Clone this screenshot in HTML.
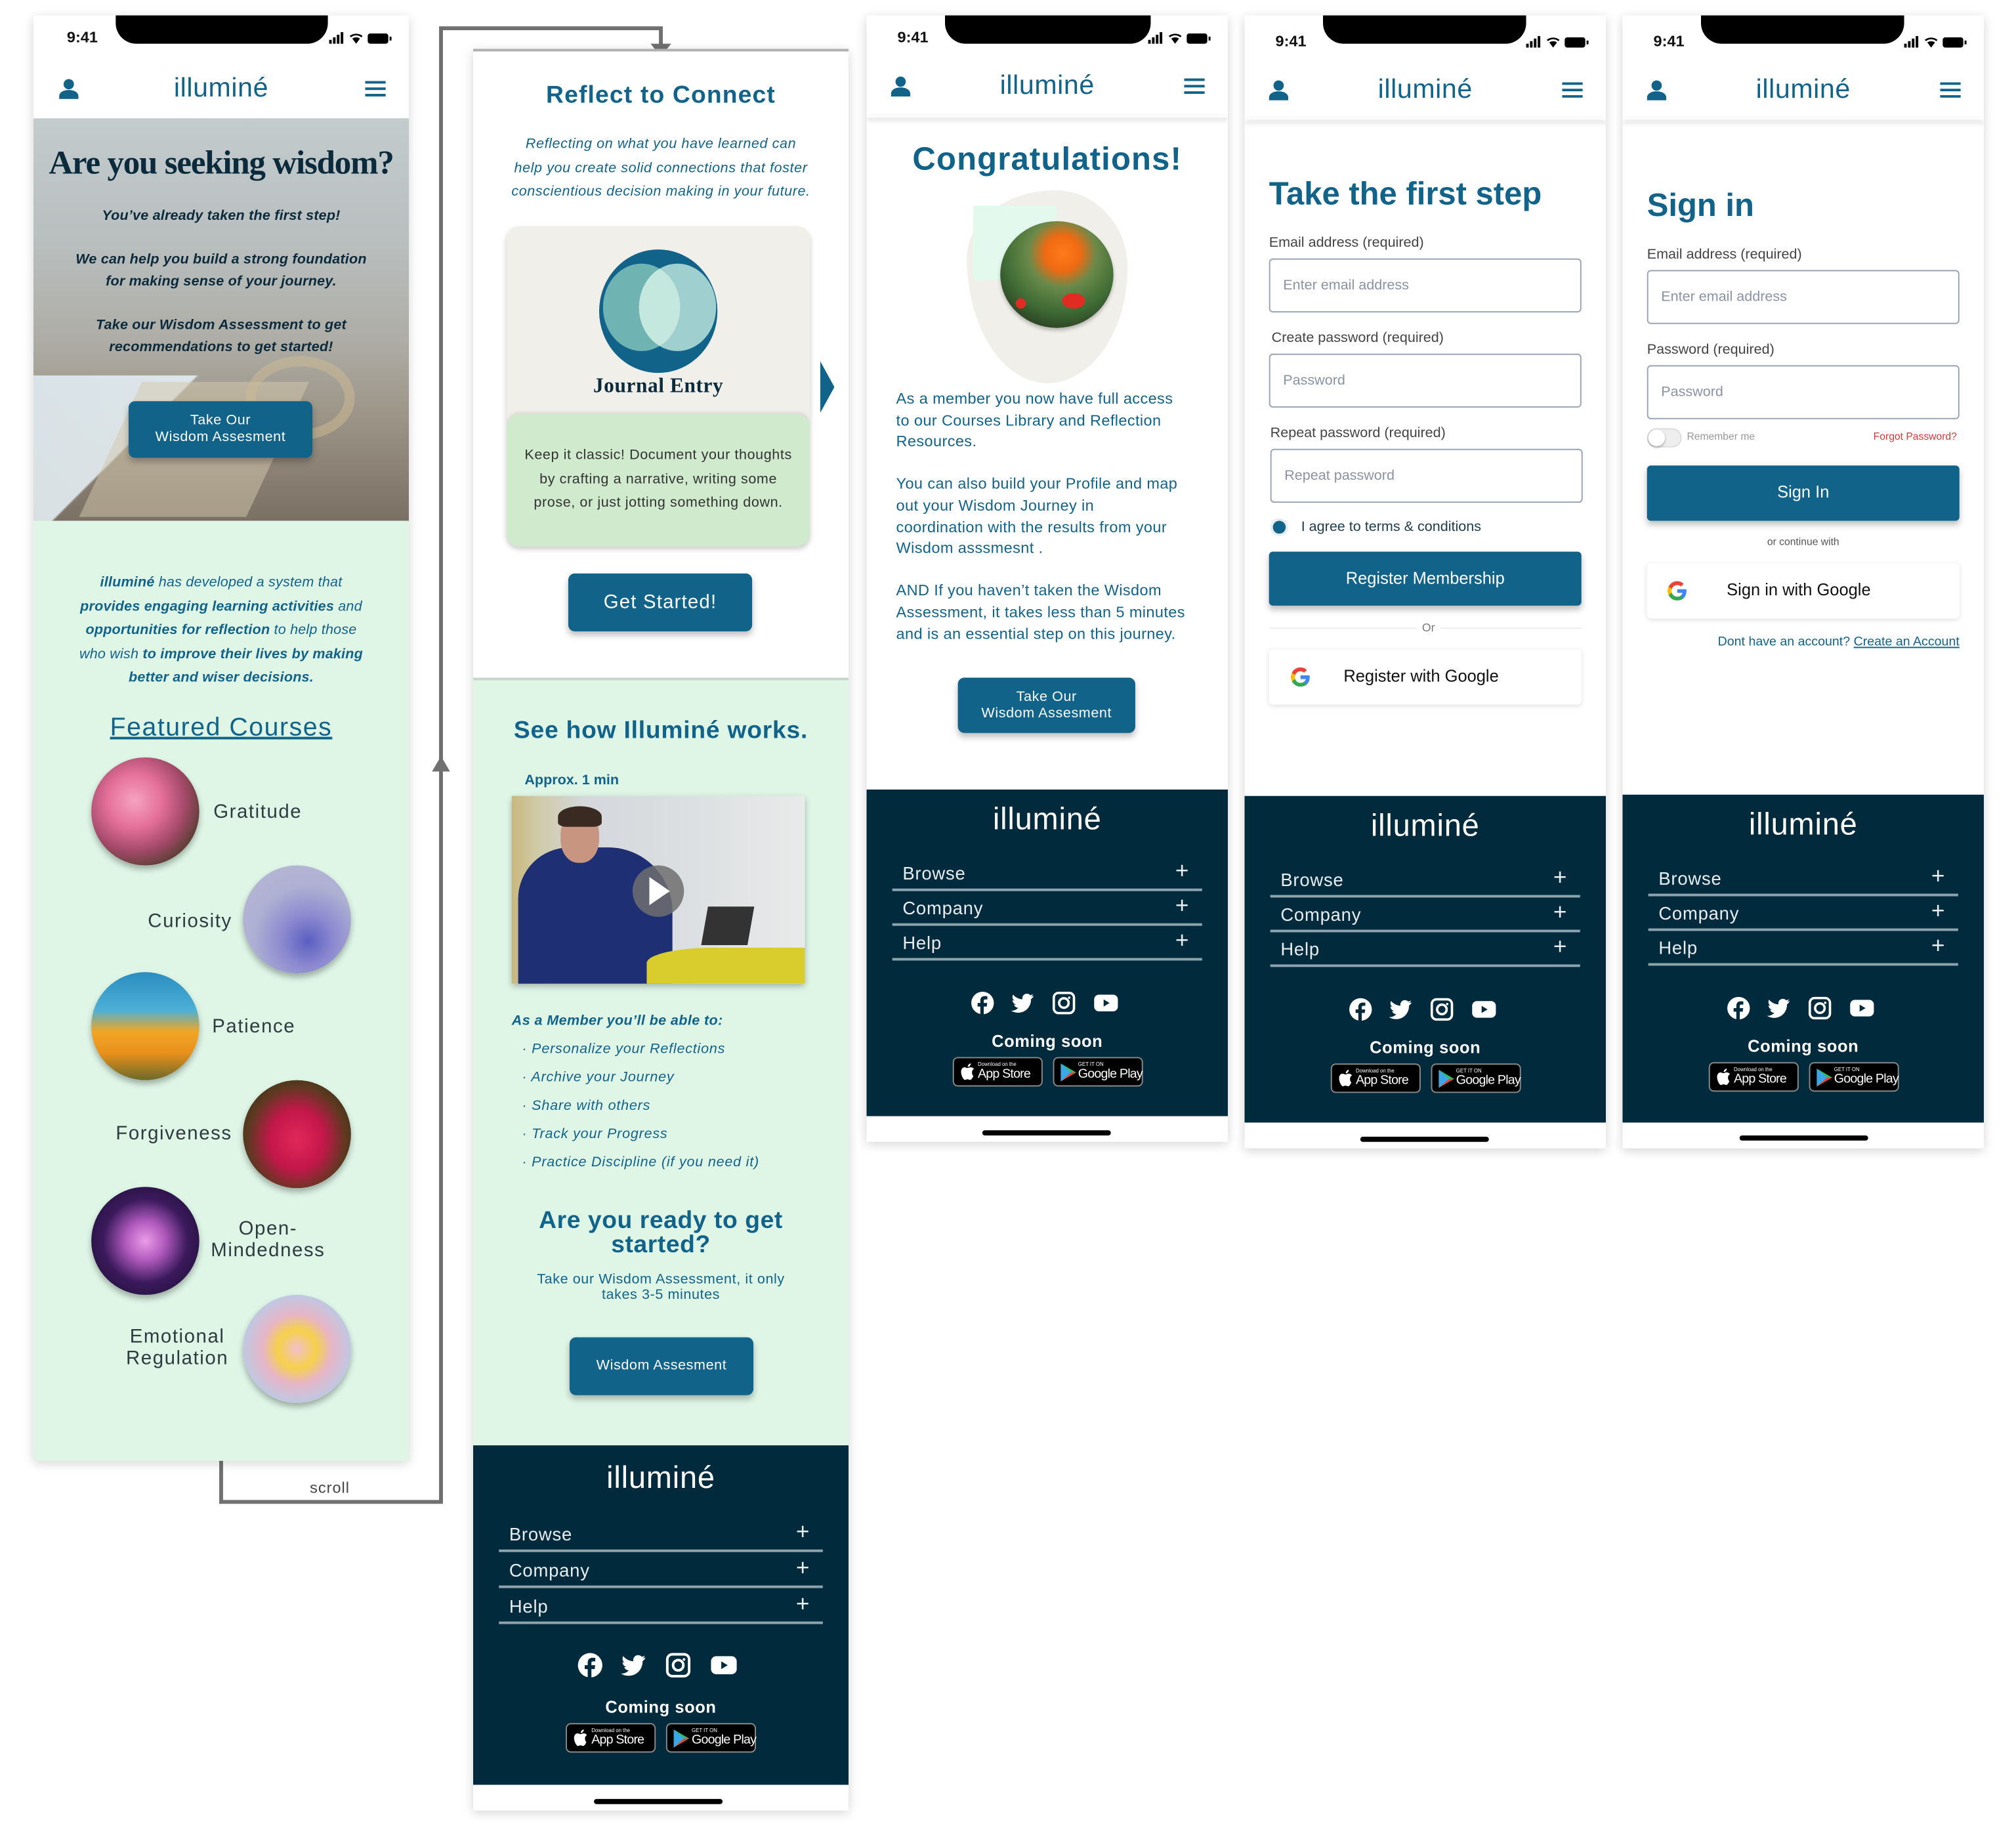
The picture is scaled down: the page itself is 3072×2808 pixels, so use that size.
<!DOCTYPE html>
<html><head><meta charset="utf-8">
<style>
*{box-sizing:border-box;margin:0;padding:0}
html,body{width:3072px;height:2808px;overflow:hidden;background:#fff}
body{font-family:"Liberation Sans",sans-serif}
.w{position:absolute;left:0;top:0;width:1568px;height:1433px;transform:scale(1.95918);transform-origin:0 0}
.a{position:absolute}
.ph{position:absolute;background:#fff;box-shadow:0 2px 8px rgba(0,0,0,.18);overflow:hidden}
.c{text-align:center;left:0;right:0}
.teal{color:#12638a}
.btn{position:absolute;background:#12638a;color:#fff;border-radius:5px;text-align:center;box-shadow:0 3px 5px rgba(0,0,0,.25);display:flex;align-items:center;justify-content:center;line-height:1.15;letter-spacing:.3px}
.notch{position:absolute;top:0;height:22px;background:#000;border-radius:0 0 16px 16px}
.time{position:absolute;font-size:12px;font-weight:bold;color:#111}
.sig{position:absolute;width:50px;height:10px}
.logo{position:absolute;font-size:21px;color:#12638a;text-align:center;left:0;right:0;letter-spacing:.3px}
.hdr{position:absolute;left:0;right:0;height:1px;box-shadow:0 2px 4px rgba(0,0,0,.35)}
.ft{position:absolute;left:0;right:0;background:#022a3d;color:#fff}
.ft .lg{position:absolute;left:0;right:0;text-align:center;font-size:24px;top:10px;letter-spacing:.4px}
.ft .row{position:absolute;left:20px;right:20px;height:27px;border-bottom:2px solid #8da4ae;font-size:14px;color:#e8eef0;letter-spacing:.4px}
.ft .row span{position:absolute;left:8px;top:5px}
.ft .row b{position:absolute;right:10px;top:1px;font-weight:normal;font-size:18px}
.ft .ic{position:absolute;left:0;right:0;text-align:center;white-space:nowrap}
.ft .cs{position:absolute;left:0;right:0;text-align:center;font-size:13px;font-weight:bold;letter-spacing:.3px}
.bd{display:inline-block;width:70px;height:23px;background:#000;border:1px solid #888;border-radius:4px;margin:0 4px;position:relative;color:#fff;text-align:left;vertical-align:top;white-space:nowrap}
.bd i{position:absolute;left:19px;top:2px;font-style:normal;font-size:4px}
.bd em{position:absolute;left:19px;top:7px;font-style:normal;font-size:10px;letter-spacing:-.4px;white-space:nowrap}
.hb{position:absolute;height:4px;width:100px;background:#000;border-radius:2px}
.lbl{position:absolute;font-size:11px;color:#444}
.inp{position:absolute;height:42px;border:1px solid #9aa3b5;border-radius:3px;font-size:11px;color:#8a93a3;padding:14px 10px}
.flow{position:absolute;width:84px;height:84px;border-radius:50%;box-shadow:0 3px 5px rgba(0,0,0,.3)}
.cl{position:absolute;font-size:15px;color:#2e3b40;text-align:center;letter-spacing:.8px}
.ml{position:absolute;font-size:11px;font-style:italic;color:#12638a;letter-spacing:.4px}
</style></head><body><div class="w">

<svg class="a" style="left:0;top:0" width="1568" height="1433">
<polyline points="172,1136 172,1168 343,1168 343,22 514,22 514,36" fill="none" stroke="#707070" stroke-width="3"/>
<polygon points="506,34 522,34 514,44" fill="#707070"/>
<polygon points="336,600 350,600 343,588" fill="#707070"/>
</svg>
<div class="a" style="left:241px;top:1150px;font-size:12px;color:#444;letter-spacing:.5px">scroll</div>

<!-- PHONE A -->
<div class="ph" style="left:26px;top:12px;width:292px;height:1124px">
  <div class="notch" style="left:64px;width:165px"></div>
  <div class="time" style="left:26px;top:10px">9:41</div>
  <svg class="sig" style="right:12px;top:13px" viewBox="0 0 50 10"><rect x="0" y="6" width="2" height="3"/><rect x="3" y="4" width="2" height="5"/><rect x="6" y="2" width="2" height="7"/><rect x="9" y="0" width="2" height="9"/><path d="M16 3a8 8 0 0 1 10 0l-1 1a6 6 0 0 0-8 0zM18 5a5 5 0 0 1 6 0l-3 4z"/><rect x="30" y="1" width="16" height="8" rx="2"/><rect x="47" y="3.5" width="1.5" height="3"/></svg>
  <svg class="a" style="left:20px;top:49px" width="15" height="16" viewBox="0 0 15 16"><circle cx="7.5" cy="4.5" r="4" fill="#12638a"/><path d="M0 16v-2c0-3 3-5 7.5-5s7.5 2 7.5 5v2z" fill="#12638a"/></svg>
  <div class="logo" style="top:45px">illuminé</div>
  <svg class="a" style="right:18px;top:51px" width="16" height="12"><rect y="0" width="16" height="2" fill="#12638a"/><rect y="5" width="16" height="2" fill="#12638a"/><rect y="10" width="16" height="2" fill="#12638a"/></svg>
  <div class="a" style="left:0;top:80px;width:292px;height:313px;background:linear-gradient(180deg,#c3cbcd 0%,#b9bfbf 30%,#aeada6 55%,#9b9385 75%,#7a7064 100%)">
    <div class="a" style="left:0;top:200px;width:140px;height:113px;background:linear-gradient(135deg,#dfeaf0 0%,#e3edf2 50%,transparent 51%);opacity:.9"></div>
    <div class="a" style="left:60px;top:205px;width:130px;height:105px;background:#d4c8ab;opacity:.5;transform:skewX(-25deg)"></div>
    <div class="a" style="left:165px;top:185px;width:85px;height:65px;border-radius:50%;border:8px solid #cdbb94;opacity:.5"></div>
  </div>
  <div class="a c" style="top:100px;font-family:'Liberation Serif',serif;font-weight:bold;font-size:26px;color:#0b2a3b;letter-spacing:-.6px">Are you seeking wisdom?</div>
  <div class="a c" style="top:148px;font-size:11px;font-weight:bold;font-style:italic;color:#0b2a3b;line-height:17px;letter-spacing:.1px">You’ve already taken the first step!<br><br>We can help you build a strong foundation<br>for making sense of your journey.<br><br>Take our Wisdom Assessment to get<br>recommendations to get started!</div>
  <div class="btn" style="left:74px;top:300px;width:143px;height:44px;font-size:11px">Take Our<br>Wisdom Assesment</div>
  <div class="a" style="left:0;top:393px;width:292px;height:731px;background:#dff6e7"></div>
  <div class="a c" style="top:432px;font-size:11px;font-style:italic;color:#12638a;line-height:18.5px;letter-spacing:.1px"><b>illuminé</b> has developed a system that<br><b>provides engaging learning activities</b> and<br><b>opportunities for reflection</b> to help those<br>who wish <b>to improve their lives by making<br>better and wiser decisions.</b></div>
  <div class="a c" style="top:543px;font-size:20px;color:#12638a;text-decoration:underline;letter-spacing:.8px">Featured Courses</div>
  <div class="flow" style="left:45px;top:577px;background:radial-gradient(circle at 40% 40%,#f6a3c0 0%,#e46f98 30%,#a54a6a 55%,#3b3a1e 85%)"></div>
  <div class="cl" style="left:140px;top:611px">Gratitude</div>
  <div class="flow" style="left:163px;top:661px;background:radial-gradient(circle at 60% 70%,#5a5ec0 0%,#8b88d0 25%,#aeb0d3 55%,#b9bad4 100%)"></div>
  <div class="cl" style="left:89px;top:696px">Curiosity</div>
  <div class="flow" style="left:45px;top:744px;background:linear-gradient(180deg,#2a8dc0 0%,#4bb0d6 35%,#f0a625 55%,#e8901c 75%,#6b6a2a 100%)"></div>
  <div class="cl" style="left:139px;top:778px">Patience</div>
  <div class="flow" style="left:163px;top:828px;background:radial-gradient(ellipse at 50% 55%,#e0285a 0%,#c4174a 35%,#5a3a1f 65%,#2a2418 100%)"></div>
  <div class="cl" style="left:64px;top:861px">Forgiveness</div>
  <div class="flow" style="left:45px;top:911px;background:radial-gradient(circle at 50% 50%,#e99ce6 0%,#b35cc0 25%,#3b1a5c 55%,#140b2a 100%)"></div>
  <div class="cl" style="left:138px;top:935px;line-height:17px">Open-<br>Mindedness</div>
  <div class="flow" style="left:163px;top:995px;background:radial-gradient(circle at 50% 50%,#f2c0cb 0%,#f5d14a 25%,#e7b5c6 45%,#b9cbe8 75%,#c6d5ee 100%)"></div>
  <div class="cl" style="left:72px;top:1019px;line-height:17px">Emotional<br>Regulation</div>
</div>

<!-- PHONE B -->
<div class="ph" style="left:368px;top:38px;width:292px;height:1370px;border-top:2px solid #b0b0b0">
  <div class="a c teal" style="top:24px;font-size:19px;font-weight:bold;letter-spacing:.6px">Reflect to Connect</div>
  <div class="a c teal" style="top:63px;font-size:11px;font-style:italic;line-height:18.5px;letter-spacing:.3px">Reflecting on what you have  learned can<br>help you create solid connections that foster<br>conscientious decision making in your future.</div>
  <div class="a" style="left:26px;top:136px;width:236px;height:249px;border-radius:10px;background:#f1efea;box-shadow:0 2px 4px rgba(0,0,0,.2);overflow:hidden">
    <svg class="a" style="left:71px;top:16px" width="94" height="100"><ellipse cx="47" cy="50" rx="46" ry="48" fill="#12638a"/><ellipse cx="34" cy="47" rx="30" ry="34" fill="#6fb3b3"/><ellipse cx="62" cy="47" rx="30" ry="34" fill="#b0dad6" opacity=".9"/><clipPath id="cp"><ellipse cx="34" cy="47" rx="30" ry="34"/></clipPath><ellipse cx="62" cy="47" rx="30" ry="34" fill="#c4e8de" clip-path="url(#cp)"/></svg>
    <div class="a c" style="top:116px;font-family:'Liberation Serif',serif;font-weight:bold;font-size:16px;color:#0b2a3b;letter-spacing:.3px">Journal Entry</div>
    <div class="a" style="left:0;top:146px;width:236px;height:103px;background:#cfeacc;border-radius:10px;box-shadow:0 -1px 3px rgba(0,0,0,.1)"></div>
    <div class="a c" style="top:169px;font-size:11px;color:#333;line-height:18.5px;letter-spacing:.3px">Keep it classic! Document your thoughts<br>by crafting a narrative, writing some<br>prose, or just jotting something down.</div>
  </div>
  <svg class="a" style="left:270px;top:241px" width="12" height="40"><polygon points="0,0 11,20 0,40" fill="#12638a"/></svg>
  <div class="btn" style="left:74px;top:406px;width:143px;height:45px;font-size:15px;letter-spacing:.6px">Get Started!</div>
  <div class="a" style="left:0;top:487px;width:292px;height:597px;background:#dff6e7;border-top:2px solid #c6d6cc"></div>
  <div class="a c teal" style="top:518px;font-size:19px;font-weight:bold;letter-spacing:.4px">See how Illuminé works.</div>
  <div class="a teal" style="left:40px;top:561px;font-size:11px;font-weight:bold">Approx. 1 min</div>
  <div class="a" style="left:30px;top:579px;width:228px;height:146px;background:linear-gradient(90deg,#c9b77d 0%,#cfc9a4 8%,#d4d8dc 25%,#dcdfe1 60%,#e9eaea 100%);box-shadow:0 2px 5px rgba(0,0,0,.3);overflow:hidden">
    <div class="a" style="left:5px;top:40px;width:120px;height:110px;background:#1f2f73;border-radius:40px 50px 0 0"></div>
    <div class="a" style="left:38px;top:12px;width:30px;height:40px;background:#c89580;border-radius:45%"></div>
    <div class="a" style="left:36px;top:8px;width:34px;height:16px;background:#3a2b22;border-radius:50% 50% 20% 20%"></div>
    <div class="a" style="left:105px;top:118px;width:130px;height:30px;background:#d9cc2d;border-radius:40% 0 0 0"></div>
    <div class="a" style="left:150px;top:86px;width:36px;height:30px;background:#333;transform:skewX(-10deg)"></div>
    <div class="a" style="left:94px;top:54px;width:40px;height:40px;border-radius:50%;background:rgba(110,110,110,.85)"></div>
    <svg class="a" style="left:107px;top:63px" width="18" height="22"><polygon points="0,0 16,11 0,22" fill="#fff"/></svg>
  </div>
  <div class="a teal" style="left:30px;top:748px;font-size:11px;font-weight:bold;font-style:italic;letter-spacing:.2px">As a Member you’ll be able to:</div>
  <div class="ml" style="left:38px;top:770px">· Personalize your Reflections</div>
  <div class="ml" style="left:38px;top:792px">· Archive your Journey</div>
  <div class="ml" style="left:38px;top:814px">· Share with others</div>
  <div class="ml" style="left:38px;top:836px">· Track your Progress</div>
  <div class="ml" style="left:38px;top:858px">· Practice Discipline (if you need it)</div>
  <div class="a c teal" style="top:900px;font-size:19px;font-weight:bold;line-height:19px;letter-spacing:.3px">Are you ready to get<br>started?</div>
  <div class="a c teal" style="top:950px;font-size:11px;line-height:11.5px;letter-spacing:.3px">Take our Wisdom Assessment, it only<br>takes 3-5 minutes</div>
  <div class="btn" style="left:75px;top:1000px;width:143px;height:45px;font-size:11px">Wisdom Assesment</div>
  <div class="ft" style="top:1084px;height:264px">
    <div class="lg" style="top:12px">illuminé</div>
    <div class="row" style="top:56px"><span>Browse</span><b>+</b></div>
    <div class="row" style="top:84px"><span>Company</span><b>+</b></div>
    <div class="row" style="top:112px"><span>Help</span><b>+</b></div>
    <div class="ic" style="top:161px"><svg width="130" height="20" viewBox="0 0 130 20"><circle cx="10" cy="10" r="9.5" fill="#fff"/><path d="M11 20v-7h2.5l.4-3H11V8.3c0-.8.3-1.3 1.4-1.3H14V4.3c-.3 0-1.2-.1-2.2-.1-2.2 0-3.7 1.3-3.7 3.8V10H5.8v3h2.3v7z" fill="#022a3d"/><path d="M53 4c-.7.3-1.4.5-2.2.6.8-.5 1.4-1.2 1.7-2.1-.7.4-1.6.8-2.4.9a3.8 3.8 0 0 0-6.5 3.5c-3.2-.2-6-1.7-7.9-4a3.8 3.8 0 0 0 1.2 5.1c-.6 0-1.2-.2-1.7-.5 0 1.9 1.3 3.4 3 3.8-.6.2-1.2.2-1.7.1.5 1.5 1.9 2.6 3.6 2.6A7.7 7.7 0 0 1 34 16.5c1.7 1.1 3.7 1.7 5.9 1.7 7 0 10.9-5.8 10.9-10.9v-.5c.8-.6 1.4-1.2 1.9-2z" fill="#fff"/><rect x="70" y="1.5" width="17" height="17" rx="4" fill="none" stroke="#fff" stroke-width="2"/><circle cx="78.5" cy="10" r="4" fill="none" stroke="#fff" stroke-width="2"/><circle cx="83" cy="5.5" r="1" fill="#fff"/><rect x="104" y="3" width="20" height="14" rx="4" fill="#fff"/><polygon points="112,7 112,13 117,10" fill="#022a3d"/></svg></div>
    <div class="cs" style="top:196px">Coming soon</div>
    <div class="ic" style="top:216px"><span class="bd"><svg class="a" style="left:5px;top:4px" width="11" height="13"><path d="M9 7c0-2 1.5-2.6 1.5-2.7-.8-1.2-2-1.3-2.5-1.3-1-.1-2 .6-2.5.6S4 3 3.2 3C2 3 .5 4 .5 6.6c0 2.6 1.8 6.2 3 6.2.7 0 1-.5 2-.5s1.2.5 2 .5c1.3 0 2.4-2.6 2.6-3C9.8 9.6 9 8.7 9 7zM7.4 1.8C7.9 1.2 8.2.5 8.1 0c-.6 0-1.4.4-1.8 1-.4.4-.7 1.1-.6 1.7.7 0 1.3-.4 1.7-.9z" fill="#fff"/></svg><i>Download on the</i><em>App Store</em></span><span class="bd"><svg class="a" style="left:5px;top:4px" width="12" height="14"><polygon points="0,0 12,7 0,14" fill="#2fbd6b"/><polygon points="0,0 8,7 0,14" fill="#3aa8e8"/><polygon points="8,7 12,7 0,14" fill="#e94335"/></svg><i>GET IT ON</i><em>Google Play</em></span></div>
  </div>
  <div class="hb" style="left:94px;top:1359px"></div>
</div>

<!-- PHONE C -->
<div class="ph" style="left:674px;top:12px;width:281px;height:876px">
  <div class="notch" style="left:61px;width:160px"></div>
  <div class="time" style="left:24px;top:10px">9:41</div>
  <svg class="sig" style="right:12px;top:13px" viewBox="0 0 50 10"><rect x="0" y="6" width="2" height="3"/><rect x="3" y="4" width="2" height="5"/><rect x="6" y="2" width="2" height="7"/><rect x="9" y="0" width="2" height="9"/><path d="M16 3a8 8 0 0 1 10 0l-1 1a6 6 0 0 0-8 0zM18 5a5 5 0 0 1 6 0l-3 4z"/><rect x="30" y="1" width="16" height="8" rx="2"/><rect x="47" y="3.5" width="1.5" height="3"/></svg>
  <svg class="a" style="left:19px;top:47px" width="15" height="16" viewBox="0 0 15 16"><circle cx="7.5" cy="4.5" r="4" fill="#12638a"/><path d="M0 16v-2c0-3 3-5 7.5-5s7.5 2 7.5 5v2z" fill="#12638a"/></svg>
  <div class="logo" style="top:43px">illuminé</div>
  <svg class="a" style="right:18px;top:49px" width="16" height="12"><rect y="0" width="16" height="2" fill="#12638a"/><rect y="5" width="16" height="2" fill="#12638a"/><rect y="10" width="16" height="2" fill="#12638a"/></svg>
  <div class="hdr" style="top:78px"></div>
  <div class="a c teal" style="top:98px;font-size:25px;font-weight:bold;letter-spacing:.6px">Congratulations!</div>
  <div class="a" style="left:78px;top:136px;width:125px;height:150px;background:#f1efea;border-radius:55% 45% 50% 50% / 35% 40% 60% 65%"></div>
  <div class="a" style="left:83px;top:148px;width:65px;height:58px;background:#e3f9ee"></div>
  <div class="a" style="left:104px;top:160px;width:88px;height:83px;border-radius:50%;background:radial-gradient(circle at 55% 30%,#ff7a1a 0%,#f06a12 18%,#6a8a4a 35%,#3f6b35 60%,#27391f 85%);box-shadow:0 2px 3px rgba(0,0,0,.25)"><div class="a" style="left:48px;top:56px;width:18px;height:12px;border-radius:50%;background:#e12c24"></div><div class="a" style="left:12px;top:60px;width:8px;height:8px;border-radius:50%;background:#e12c24"></div></div>
  <div class="a teal" style="left:23px;top:290px;font-size:12px;line-height:16.6px;width:260px;white-space:nowrap;letter-spacing:.2px">As a member you now have full access<br>to our Courses Library and Reflection<br>Resources.<br><br>You can also build your Profile and map<br>out your Wisdom Journey in<br>coordination with the results from your<br>Wisdom asssmesnt .<br><br>AND If you haven’t taken the Wisdom<br>Assessment, it takes less than 5 minutes<br>and is an essential step on this journey.</div>
  <div class="btn" style="left:71px;top:515px;width:138px;height:43px;font-size:11px">Take Our<br>Wisdom Assesment</div>
  <div class="ft" style="top:602px;height:254px">
    <div class="lg">illuminé</div>
    <div class="row" style="top:52px"><span>Browse</span><b>+</b></div>
    <div class="row" style="top:79px"><span>Company</span><b>+</b></div>
    <div class="row" style="top:106px"><span>Help</span><b>+</b></div>
    <div class="ic" style="top:156px"><svg width="120" height="20" viewBox="0 0 130 20"><circle cx="10" cy="10" r="9.5" fill="#fff"/><path d="M11 20v-7h2.5l.4-3H11V8.3c0-.8.3-1.3 1.4-1.3H14V4.3c-.3 0-1.2-.1-2.2-.1-2.2 0-3.7 1.3-3.7 3.8V10H5.8v3h2.3v7z" fill="#022a3d"/><path d="M53 4c-.7.3-1.4.5-2.2.6.8-.5 1.4-1.2 1.7-2.1-.7.4-1.6.8-2.4.9a3.8 3.8 0 0 0-6.5 3.5c-3.2-.2-6-1.7-7.9-4a3.8 3.8 0 0 0 1.2 5.1c-.6 0-1.2-.2-1.7-.5 0 1.9 1.3 3.4 3 3.8-.6.2-1.2.2-1.7.1.5 1.5 1.9 2.6 3.6 2.6A7.7 7.7 0 0 1 34 16.5c1.7 1.1 3.7 1.7 5.9 1.7 7 0 10.9-5.8 10.9-10.9v-.5c.8-.6 1.4-1.2 1.9-2z" fill="#fff"/><rect x="70" y="1.5" width="17" height="17" rx="4" fill="none" stroke="#fff" stroke-width="2"/><circle cx="78.5" cy="10" r="4" fill="none" stroke="#fff" stroke-width="2"/><circle cx="83" cy="5.5" r="1" fill="#fff"/><rect x="104" y="3" width="20" height="14" rx="4" fill="#fff"/><polygon points="112,7 112,13 117,10" fill="#022a3d"/></svg></div>
    <div class="cs" style="top:188px">Coming soon</div>
    <div class="ic" style="top:208px"><span class="bd"><svg class="a" style="left:5px;top:4px" width="11" height="13"><path d="M9 7c0-2 1.5-2.6 1.5-2.7-.8-1.2-2-1.3-2.5-1.3-1-.1-2 .6-2.5.6S4 3 3.2 3C2 3 .5 4 .5 6.6c0 2.6 1.8 6.2 3 6.2.7 0 1-.5 2-.5s1.2.5 2 .5c1.3 0 2.4-2.6 2.6-3C9.8 9.6 9 8.7 9 7zM7.4 1.8C7.9 1.2 8.2.5 8.1 0c-.6 0-1.4.4-1.8 1-.4.4-.7 1.1-.6 1.7.7 0 1.3-.4 1.7-.9z" fill="#fff"/></svg><i>Download on the</i><em>App Store</em></span><span class="bd"><svg class="a" style="left:5px;top:4px" width="12" height="14"><polygon points="0,0 12,7 0,14" fill="#2fbd6b"/><polygon points="0,0 8,7 0,14" fill="#3aa8e8"/><polygon points="8,7 12,7 0,14" fill="#e94335"/></svg><i>GET IT ON</i><em>Google Play</em></span></div>
  </div>
  <div class="hb" style="left:90px;top:867px"></div>
</div>

<!-- PHONE D -->
<div class="ph" style="left:968px;top:12px;width:281px;height:881px">
  <div class="notch" style="left:61px;width:158px"></div>
  <div class="time" style="left:24px;top:13px">9:41</div>
  <svg class="sig" style="right:12px;top:16px" viewBox="0 0 50 10"><rect x="0" y="6" width="2" height="3"/><rect x="3" y="4" width="2" height="5"/><rect x="6" y="2" width="2" height="7"/><rect x="9" y="0" width="2" height="9"/><path d="M16 3a8 8 0 0 1 10 0l-1 1a6 6 0 0 0-8 0zM18 5a5 5 0 0 1 6 0l-3 4z"/><rect x="30" y="1" width="16" height="8" rx="2"/><rect x="47" y="3.5" width="1.5" height="3"/></svg>
  <svg class="a" style="left:19px;top:50px" width="15" height="16" viewBox="0 0 15 16"><circle cx="7.5" cy="4.5" r="4" fill="#12638a"/><path d="M0 16v-2c0-3 3-5 7.5-5s7.5 2 7.5 5v2z" fill="#12638a"/></svg>
  <div class="logo" style="top:46px">illuminé</div>
  <svg class="a" style="right:18px;top:52px" width="16" height="12"><rect y="0" width="16" height="2" fill="#12638a"/><rect y="5" width="16" height="2" fill="#12638a"/><rect y="10" width="16" height="2" fill="#12638a"/></svg>
  <div class="hdr" style="top:80px"></div>
  <div class="a teal" style="left:19px;top:125px;font-size:25px;font-weight:bold">Take the first step</div>
  <div class="lbl" style="left:19px;top:171px">Email address (required)</div>
  <div class="inp" style="left:19px;top:189px;width:243px">Enter email address</div>
  <div class="lbl" style="left:21px;top:245px">Create password (required)</div>
  <div class="inp" style="left:19px;top:263px;width:243px">Password</div>
  <div class="lbl" style="left:20px;top:319px">Repeat password (required)</div>
  <div class="inp" style="left:20px;top:337px;width:243px">Repeat password</div>
  <div class="a" style="left:22px;top:393px;width:10px;height:10px;border-radius:50%;background:#12638a;box-shadow:0 0 0 2px #e7ecef"></div>
  <div class="a" style="left:44px;top:392px;font-size:11px;color:#1d3b4a">I agree to terms &amp; conditions</div>
  <div class="btn" style="left:19px;top:417px;width:243px;height:42px;font-size:13px;border-radius:3px;letter-spacing:0">Register Membership</div>
  <div class="a" style="left:19px;top:476px;width:243px;border-top:1px solid #eee"></div>
  <div class="a" style="left:134px;top:471px;background:#fff;padding:0 4px;font-size:9px;color:#777">Or</div>
  <div class="a" style="left:19px;top:493px;width:243px;height:43px;background:#fff;box-shadow:0 1px 4px rgba(0,0,0,.12);border-radius:3px"></div>
  <svg class="a" style="left:36px;top:507px" width="15" height="15" viewBox="0 0 24 24"><path d="M23.5 12.3c0-.8-.1-1.6-.2-2.3H12v4.5h6.5a5.6 5.6 0 0 1-2.4 3.6v3h3.9c2.2-2.1 3.5-5.2 3.5-8.8z" fill="#4285f4"/><path d="M12 24c3.2 0 6-1.1 8-2.9l-3.9-3c-1.1.7-2.5 1.2-4.1 1.2-3.1 0-5.8-2.1-6.7-5H1.3v3.1A12 12 0 0 0 12 24z" fill="#34a853"/><path d="M5.3 14.3a7.2 7.2 0 0 1 0-4.6V6.6H1.3a12 12 0 0 0 0 10.8z" fill="#fbbc05"/><path d="M12 4.8c1.8 0 3.3.6 4.6 1.8l3.4-3.4A11.6 11.6 0 0 0 12 0 12 12 0 0 0 1.3 6.6l4 3.1C6.2 6.9 8.9 4.8 12 4.8z" fill="#ea4335"/></svg>
  <div class="a" style="left:77px;top:506px;font-size:13px;color:#111">Register with Google</div>
  <div class="ft" style="top:607px;height:254px">
    <div class="lg">illuminé</div>
    <div class="row" style="top:52px"><span>Browse</span><b>+</b></div>
    <div class="row" style="top:79px"><span>Company</span><b>+</b></div>
    <div class="row" style="top:106px"><span>Help</span><b>+</b></div>
    <div class="ic" style="top:156px"><svg width="120" height="20" viewBox="0 0 130 20"><circle cx="10" cy="10" r="9.5" fill="#fff"/><path d="M11 20v-7h2.5l.4-3H11V8.3c0-.8.3-1.3 1.4-1.3H14V4.3c-.3 0-1.2-.1-2.2-.1-2.2 0-3.7 1.3-3.7 3.8V10H5.8v3h2.3v7z" fill="#022a3d"/><path d="M53 4c-.7.3-1.4.5-2.2.6.8-.5 1.4-1.2 1.7-2.1-.7.4-1.6.8-2.4.9a3.8 3.8 0 0 0-6.5 3.5c-3.2-.2-6-1.7-7.9-4a3.8 3.8 0 0 0 1.2 5.1c-.6 0-1.2-.2-1.7-.5 0 1.9 1.3 3.4 3 3.8-.6.2-1.2.2-1.7.1.5 1.5 1.9 2.6 3.6 2.6A7.7 7.7 0 0 1 34 16.5c1.7 1.1 3.7 1.7 5.9 1.7 7 0 10.9-5.8 10.9-10.9v-.5c.8-.6 1.4-1.2 1.9-2z" fill="#fff"/><rect x="70" y="1.5" width="17" height="17" rx="4" fill="none" stroke="#fff" stroke-width="2"/><circle cx="78.5" cy="10" r="4" fill="none" stroke="#fff" stroke-width="2"/><circle cx="83" cy="5.5" r="1" fill="#fff"/><rect x="104" y="3" width="20" height="14" rx="4" fill="#fff"/><polygon points="112,7 112,13 117,10" fill="#022a3d"/></svg></div>
    <div class="cs" style="top:188px">Coming soon</div>
    <div class="ic" style="top:208px"><span class="bd"><svg class="a" style="left:5px;top:4px" width="11" height="13"><path d="M9 7c0-2 1.5-2.6 1.5-2.7-.8-1.2-2-1.3-2.5-1.3-1-.1-2 .6-2.5.6S4 3 3.2 3C2 3 .5 4 .5 6.6c0 2.6 1.8 6.2 3 6.2.7 0 1-.5 2-.5s1.2.5 2 .5c1.3 0 2.4-2.6 2.6-3C9.8 9.6 9 8.7 9 7zM7.4 1.8C7.9 1.2 8.2.5 8.1 0c-.6 0-1.4.4-1.8 1-.4.4-.7 1.1-.6 1.7.7 0 1.3-.4 1.7-.9z" fill="#fff"/></svg><i>Download on the</i><em>App Store</em></span><span class="bd"><svg class="a" style="left:5px;top:4px" width="12" height="14"><polygon points="0,0 12,7 0,14" fill="#2fbd6b"/><polygon points="0,0 8,7 0,14" fill="#3aa8e8"/><polygon points="8,7 12,7 0,14" fill="#e94335"/></svg><i>GET IT ON</i><em>Google Play</em></span></div>
  </div>
  <div class="hb" style="left:90px;top:872px"></div>
</div>

<!-- PHONE E -->
<div class="ph" style="left:1262px;top:12px;width:281px;height:881px">
  <div class="notch" style="left:61px;width:158px"></div>
  <div class="time" style="left:24px;top:13px">9:41</div>
  <svg class="sig" style="right:12px;top:16px" viewBox="0 0 50 10"><rect x="0" y="6" width="2" height="3"/><rect x="3" y="4" width="2" height="5"/><rect x="6" y="2" width="2" height="7"/><rect x="9" y="0" width="2" height="9"/><path d="M16 3a8 8 0 0 1 10 0l-1 1a6 6 0 0 0-8 0zM18 5a5 5 0 0 1 6 0l-3 4z"/><rect x="30" y="1" width="16" height="8" rx="2"/><rect x="47" y="3.5" width="1.5" height="3"/></svg>
  <svg class="a" style="left:19px;top:50px" width="15" height="16" viewBox="0 0 15 16"><circle cx="7.5" cy="4.5" r="4" fill="#12638a"/><path d="M0 16v-2c0-3 3-5 7.5-5s7.5 2 7.5 5v2z" fill="#12638a"/></svg>
  <div class="logo" style="top:46px">illuminé</div>
  <svg class="a" style="right:18px;top:52px" width="16" height="12"><rect y="0" width="16" height="2" fill="#12638a"/><rect y="5" width="16" height="2" fill="#12638a"/><rect y="10" width="16" height="2" fill="#12638a"/></svg>
  <div class="hdr" style="top:80px"></div>
  <div class="a teal" style="left:19px;top:134px;font-size:25px;font-weight:bold">Sign in</div>
  <div class="lbl" style="left:19px;top:180px">Email address (required)</div>
  <div class="inp" style="left:19px;top:198px;width:243px">Enter email address</div>
  <div class="lbl" style="left:19px;top:254px">Password (required)</div>
  <div class="inp" style="left:19px;top:272px;width:243px">Password</div>
  <div class="a" style="left:19px;top:321px;width:27px;height:15px;border-radius:8px;background:#eee;box-shadow:inset 0 0 0 1px #ddd"><div class="a" style="left:1px;top:1px;width:13px;height:13px;border-radius:50%;background:#fff;box-shadow:0 1px 2px rgba(0,0,0,.3)"></div></div>
  <div class="a" style="left:50px;top:323px;font-size:8px;color:#999">Remember me</div>
  <div class="a" style="right:21px;top:323px;font-size:8px;color:#d23a3a">Forgot Password?</div>
  <div class="btn" style="left:19px;top:350px;width:243px;height:43px;font-size:13px;border-radius:3px;letter-spacing:0">Sign In</div>
  <div class="a c" style="top:405px;font-size:8px;color:#555">or continue with</div>
  <div class="a" style="left:19px;top:426px;width:243px;height:43px;background:#fff;box-shadow:0 1px 4px rgba(0,0,0,.12);border-radius:3px"></div>
  <svg class="a" style="left:35px;top:440px" width="15" height="15" viewBox="0 0 24 24"><path d="M23.5 12.3c0-.8-.1-1.6-.2-2.3H12v4.5h6.5a5.6 5.6 0 0 1-2.4 3.6v3h3.9c2.2-2.1 3.5-5.2 3.5-8.8z" fill="#4285f4"/><path d="M12 24c3.2 0 6-1.1 8-2.9l-3.9-3c-1.1.7-2.5 1.2-4.1 1.2-3.1 0-5.8-2.1-6.7-5H1.3v3.1A12 12 0 0 0 12 24z" fill="#34a853"/><path d="M5.3 14.3a7.2 7.2 0 0 1 0-4.6V6.6H1.3a12 12 0 0 0 0 10.8z" fill="#fbbc05"/><path d="M12 4.8c1.8 0 3.3.6 4.6 1.8l3.4-3.4A11.6 11.6 0 0 0 12 0 12 12 0 0 0 1.3 6.6l4 3.1C6.2 6.9 8.9 4.8 12 4.8z" fill="#ea4335"/></svg>
  <div class="a" style="left:81px;top:439px;font-size:13px;color:#111">Sign in with Google</div>
  <div class="a" style="right:19px;top:482px;font-size:10px;color:#12638a">Dont have an account? <u>Create an Account</u></div>
  <div class="ft" style="top:606px;height:255px">
    <div class="lg">illuminé</div>
    <div class="row" style="top:52px"><span>Browse</span><b>+</b></div>
    <div class="row" style="top:79px"><span>Company</span><b>+</b></div>
    <div class="row" style="top:106px"><span>Help</span><b>+</b></div>
    <div class="ic" style="top:156px"><svg width="120" height="20" viewBox="0 0 130 20"><circle cx="10" cy="10" r="9.5" fill="#fff"/><path d="M11 20v-7h2.5l.4-3H11V8.3c0-.8.3-1.3 1.4-1.3H14V4.3c-.3 0-1.2-.1-2.2-.1-2.2 0-3.7 1.3-3.7 3.8V10H5.8v3h2.3v7z" fill="#022a3d"/><path d="M53 4c-.7.3-1.4.5-2.2.6.8-.5 1.4-1.2 1.7-2.1-.7.4-1.6.8-2.4.9a3.8 3.8 0 0 0-6.5 3.5c-3.2-.2-6-1.7-7.9-4a3.8 3.8 0 0 0 1.2 5.1c-.6 0-1.2-.2-1.7-.5 0 1.9 1.3 3.4 3 3.8-.6.2-1.2.2-1.7.1.5 1.5 1.9 2.6 3.6 2.6A7.7 7.7 0 0 1 34 16.5c1.7 1.1 3.7 1.7 5.9 1.7 7 0 10.9-5.8 10.9-10.9v-.5c.8-.6 1.4-1.2 1.9-2z" fill="#fff"/><rect x="70" y="1.5" width="17" height="17" rx="4" fill="none" stroke="#fff" stroke-width="2"/><circle cx="78.5" cy="10" r="4" fill="none" stroke="#fff" stroke-width="2"/><circle cx="83" cy="5.5" r="1" fill="#fff"/><rect x="104" y="3" width="20" height="14" rx="4" fill="#fff"/><polygon points="112,7 112,13 117,10" fill="#022a3d"/></svg></div>
    <div class="cs" style="top:188px">Coming soon</div>
    <div class="ic" style="top:208px"><span class="bd"><svg class="a" style="left:5px;top:4px" width="11" height="13"><path d="M9 7c0-2 1.5-2.6 1.5-2.7-.8-1.2-2-1.3-2.5-1.3-1-.1-2 .6-2.5.6S4 3 3.2 3C2 3 .5 4 .5 6.6c0 2.6 1.8 6.2 3 6.2.7 0 1-.5 2-.5s1.2.5 2 .5c1.3 0 2.4-2.6 2.6-3C9.8 9.6 9 8.7 9 7zM7.4 1.8C7.9 1.2 8.2.5 8.1 0c-.6 0-1.4.4-1.8 1-.4.4-.7 1.1-.6 1.7.7 0 1.3-.4 1.7-.9z" fill="#fff"/></svg><i>Download on the</i><em>App Store</em></span><span class="bd"><svg class="a" style="left:5px;top:4px" width="12" height="14"><polygon points="0,0 12,7 0,14" fill="#2fbd6b"/><polygon points="0,0 8,7 0,14" fill="#3aa8e8"/><polygon points="8,7 12,7 0,14" fill="#e94335"/></svg><i>GET IT ON</i><em>Google Play</em></span></div>
  </div>
  <div class="hb" style="left:91px;top:871px"></div>
</div>

</div></body></html>
